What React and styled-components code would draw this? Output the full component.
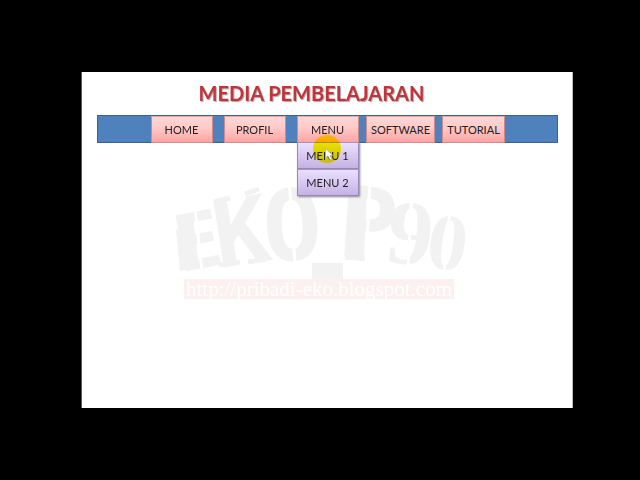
import styled, { createGlobalStyle } from 'styled-components';

const LETTERS = [
  { char: 'E', x: 203, y: 268, size: 78, tilt: -11 },
  { char: 'K', x: 246, y: 264, size: 92, tilt: -9 },
  { char: 'O', x: 294, y: 260, size: 98, tilt: -3 },
  { char: 'P', x: 366, y: 258, size: 98, tilt: 4 },
  { char: '9', x: 407, y: 264, size: 92, tilt: 6, serif: true },
  { char: '0', x: 444, y: 269, size: 80, tilt: 8, serif: true },
];

const ITEMS = ['HOME', 'PROFIL', 'MENU', 'SOFTWARE', 'TUTORIAL'];
const SUB_ITEMS = ['MENU 1', 'MENU 2'];

const Watermark = () => (
  <WatermarkWrapper>
    <Stamp viewBox='159 149 320 130' aria-label='EKO_P90'>
      {LETTERS.map(({ char, x, y, size, tilt, serif }) => (
        <StampLetter
          key={char}
          x={x}
          y={y}
          fontSize={size}
          $serif={serif}
          transform={`rotate(${tilt} ${x} ${y})`}
        >
          {char}
        </StampLetter>
      ))}
      <rect x='312' y='263' width='31' height='16' fill='#f2f2f2' />
      {/* slab feet of the stencil letters */}
      <g stroke='#f2f2f2' strokeWidth='5'>
        <path d='M214 202 L230 198 M219 265 L240 262 M245 194 L259 189 M248 262 L266 259' />
        <path d='M345 257 L367 259' />
      </g>
      {/* stems that the stencil makes heavier than the font does */}
      <g fill='#f2f2f2'>
        <path d='M176 230 L193 218 L199 267 L180 271 Z' />
        <path d='M351 184 L367 186 L364 259 L347 257 Z' />
      </g>
      <g stroke='#fff' strokeWidth='3'>
        <path d='M195 208 L202 271 M289 179 L295 264 M370 182 L366 262' />
        <path d='M412 190 L408 268 M450 210 L444 273' />
      </g>
    </Stamp>
    <SiteAddress>http://pribadi-eko.blogspot.com</SiteAddress>
  </WatermarkWrapper>
);

const Cursor = () => (
  <>
    <Highlight />
    <Pointer viewBox='0 0 8 13' aria-hidden='true'>
      <path
        d='M.5 .5 V10 L3 8 L5 12 L7 11 L5 7.500 H8 Z'
        fill='#fff'
        stroke='#999'
        strokeWidth='.5'
      />
    </Pointer>
  </>
);

const App = () => {
  return (
    <Page>
      <GlobalStyle />
      <Slide>
        <Watermark />
        <Title>MEDIA PEMBELAJARAN</Title>
        <NavBar>
          {ITEMS.map((item) => (
            <NavItem key={item}>
              <NavButton>{item}</NavButton>
              {item === 'MENU' && (
                <DropDown>
                  {SUB_ITEMS.map((sub) => (
                    <SubButton key={sub}>{sub}</SubButton>
                  ))}
                  <Cursor />
                </DropDown>
              )}
            </NavItem>
          ))}
        </NavBar>
      </Slide>
    </Page>
  );
};

const GlobalStyle = createGlobalStyle`
  * {
    box-sizing: border-box;
  }

  body {
    margin: 0;
    background-color: #000;
    font-family: Lato, sans-serif;
  }
`;

const Page = styled.div`
  min-height: 100vh;
  padding: 72px 67px 72px 81px;
`;

const Slide = styled.main`
  position: relative;
  min-height: 70vh;
  padding: 8px 14px 0 15px;
  background-color: #fff;
  border-left: 1px solid #555;
  border-right: 1px solid #bbb;
`;

const Title = styled.h1`
  position: relative;
  margin: 0 0 8px;
  padding-right: 32px;
  font-size: 20px;
  line-height: 27px;
  font-weight: 700;
  text-align: center;
  color: #c4323a;
  text-shadow: 1px 1px 1px #a8a8a8;
`;

const NavBar = styled.nav`
  position: relative;
  display: grid;
  grid-template-columns: repeat(5, 73px);
  justify-content: center;
  height: 28px;
  background-color: #4f81bd;
  border: 1px solid #3b608c;
`;

const NavItem = styled.div`
  position: relative;
  display: flex;
  justify-content: center;
  height: 27px;
`;

const NavButton = styled.button`
  min-width: 62px;
  height: 100%;
  padding: 0 4px;
  font: 11px/25px Lato, sans-serif;
  color: #222;
  background: linear-gradient(#ffd6d5, #ffcbca 40%, #ffa5a3);
  border: 1px solid #cf8b8c;
  border-top-color: #e8abab;
`;

const DropDown = styled.div`
  position: absolute;
  top: 26px;
  display: flex;
  flex-direction: column;
  box-shadow: 1px 1px 2px #888;
`;

const SubButton = styled(NavButton)`
  height: 27px;
  background: linear-gradient(#e9dfff, #dccdf5 40%, #c4b2e2);
  border-color: #9a86b8;
  border-top-color: #a995c4;
`;

const Highlight = styled.span`
  position: absolute;
  top: -7px;
  left: 16px;
  width: 28px;
  height: 28px;
  border-radius: 50%;
  background-color: #ff0;
  mix-blend-mode: multiply;
`;

const Pointer = styled.svg`
  position: absolute;
  top: 6px;
  left: 28px;
  width: 8px;
  height: 13px;
`;

const WatermarkWrapper = styled.div`
  position: absolute;
  top: 77px;
  left: 0;
  right: 16px;
  display: flex;
  flex-direction: column;
  align-items: center;
`;

const Stamp = styled.svg`
  width: 320px;
  height: 130px;
  overflow: visible;
`;

const StampLetter = styled.text`
  font-family: ${(p) =>
    p.$serif ? "'Liberation Serif', serif" : "'DejaVu Sans Mono', monospace"};
  font-weight: 700;
  text-anchor: middle;
  fill: #f2f2f2;
`;

const SiteAddress = styled.div`
  position: relative;
  width: 270px;
  font: 21px/20px 'Liberation Serif', serif;
  text-align: center;
  white-space: nowrap;
  color: #fff;
  background-color: #fdf0f0;
`;

export default App;
